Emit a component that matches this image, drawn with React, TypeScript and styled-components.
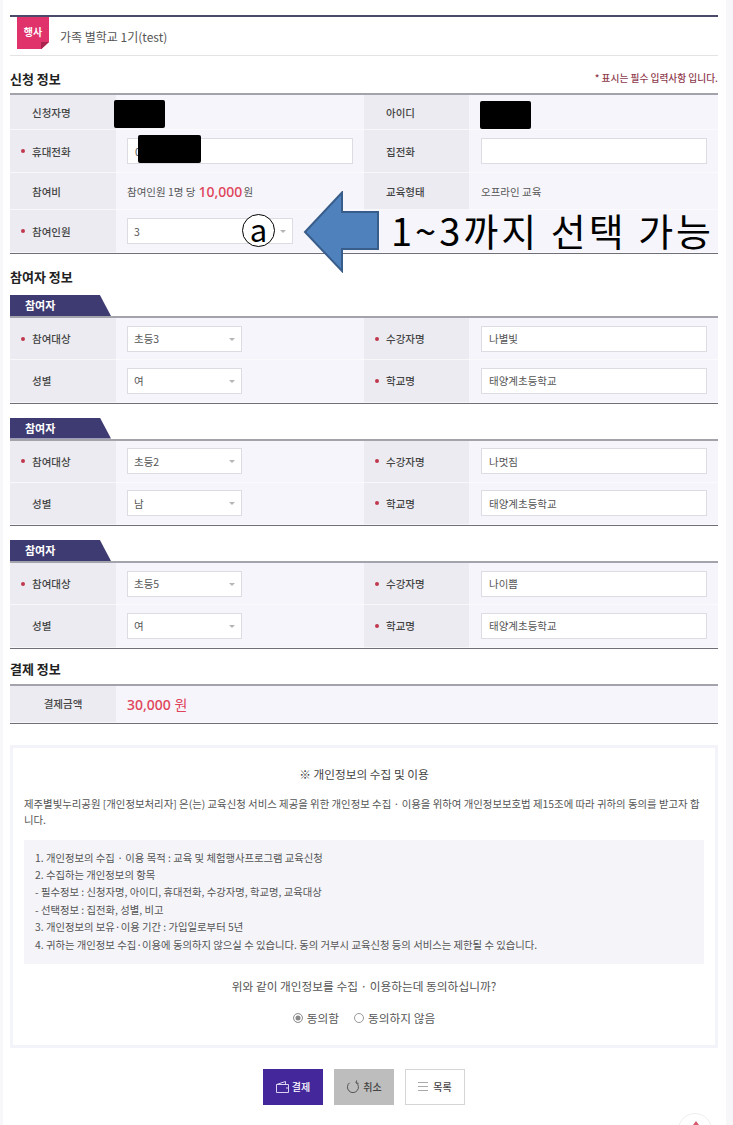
import styled, {createGlobalStyle} from "styled-components";

const GlobalStyle = createGlobalStyle`
  html, body {
    margin: 0;
    padding: 0;
    background: #fff;
  }
  body {
    font-family: "Noto Sans CJK KR", "Noto Sans", sans-serif;
    font-size: 10.5px;
    color: #555;
  }
`;

const Page = styled.div`
  position: relative;
  box-sizing: border-box;
  width: 733px;
  height: 1125px;
  overflow: hidden;
  padding: 15px 15px 0 10px;
  background: linear-gradient(to right, #f7f7f9 3px, #fff 3px, #fff 726px, #f7f7f9 726px);
`;

const EventHeader = styled.div`
  display: flex;
  align-items: center;
  height: 38px;
  border-top: 2px solid #4b4a6b;
  border-bottom: 1px solid #e3e3e3;
  padding-left: 7px;
`;

const Badge = styled.div`
  position: relative;
  align-self: flex-start;
  width: 32px;
  height: 32px;
  box-sizing: border-box;
  padding-top: 8px;
  text-align: center;
  font-size: 10px;
  font-weight: 700;
  line-height: 14px;
  color: #fff;
  background: #e0326b;
  clip-path: polygon(0 0, 100% 0, 100% 78%, 76% 100%, 0 100%);

  &::after {
    content: "";
    position: absolute;
    right: 0;
    bottom: 0;
    width: 8px;
    height: 7px;
    background: #a8244f;
  }
`;

const EventTitle = styled.div`
  margin-left: 11px;
  font-size: 12px;
  color: #555;
`;

const SectionHead = styled.div<{ $top: number }>`
  display: flex;
  justify-content: space-between;
  align-items: center;
  height: 18px;
  margin-top: ${props => props.$top}px;
  margin-bottom: 6px;
`;

const SectionTitle = styled.h2`
  margin: 0;
  font-size: 13px;
  font-weight: 700;
  color: #222;
`;

const RequiredNote = styled.div`
  font-size: 9.7px;
  font-weight: 500;
  color: #8e3a4c;
`;

const Table = styled.div`
  display: grid;
  grid-template-columns: 106px 248px 105px 249px;
  border-top: 2px solid #a3a3ab;
  border-bottom: 1px solid #6f6f7a;
`;

const Label = styled.div<{ $h: number; $center?: boolean }>`
  position: relative;
  display: flex;
  align-items: center;
  justify-content: ${props => props.$center ? "center" : "flex-start"};
  height: ${props => props.$h}px;
  padding-left: ${props => props.$center ? 0 : 22}px;
  background: #ebebf1;
  border-bottom: 1px solid #f8f8fb;
  box-sizing: border-box;
  font-weight: 500;
  color: #444;
`;

const Star = styled.span`
  position: absolute;
  left: 11px;
  top: 50%;
  margin-top: -2px;
  width: 4px;
  height: 4px;
  border-radius: 50%;
  background: #c0394f;
`;

const Value = styled.div<{ $h: number; $wide?: boolean; $right?: boolean }>`
  display: flex;
  align-items: center;
  height: ${props => props.$h}px;
  padding-left: ${props => props.$right ? 12 : 11}px;
  background: #f5f5fb;
  border-bottom: 1px solid #fbfbfd;
  box-sizing: border-box;
  grid-column: ${props => props.$wide ? "span 3" : "auto"};
  color: #555;
`;

const TextInput = styled.div`
  box-sizing: border-box;
  width: 226px;
  height: 26px;
  padding-left: 7px;
  display: flex;
  align-items: center;
  background: #fff;
  border: 1px solid #dcdce2;
`;

const SelectBox = styled.div<{ $w: number }>`
  position: relative;
  box-sizing: border-box;
  width: ${props => props.$w}px;
  height: 26px;
  padding-left: 6px;
  display: flex;
  align-items: center;
  background: #fff;
  border: 1px solid #dcdce2;

  &::after {
    content: "";
    position: absolute;
    right: 6px;
    top: 11px;
    border-left: 3px solid transparent;
    border-right: 3px solid transparent;
    border-top: 3px solid #b5b5b5;
  }
`;

const Fee = styled.strong`
  margin: 0 1px 0 3px;
  font-family: "Noto Sans", sans-serif;
  font-size: 14px;
  font-weight: 500;
  color: #e0445a;
`;

const Tab = styled.div<{ $top: number }>`
  width: 101px;
  height: 21px;
  margin-top: ${props => props.$top}px;
  padding-left: 15px;
  box-sizing: border-box;
  line-height: 20px;
  font-size: 11px;
  font-weight: 700;
  color: #fff;
  background: #3e3b72;
  clip-path: polygon(0 0, 89% 0, 100% 100%, 0 100%);
`;

const Amount = styled.div`
  font-family: "Noto Sans", sans-serif;
  font-size: 14px;
  font-weight: 500;
  color: #e0445a;

  span {
    font-weight: 400;
    font-family: "Noto Sans CJK KR", sans-serif;
  }
`;

const ConsentBox = styled.section`
  box-sizing: border-box;
  height: 303px;
  margin-top: 21px;
  padding: 17px 11px 0;
  border: 3px solid #f3f3fa;
`;

const ConsentTitle = styled.div`
  text-align: center;
  font-size: 11.7px;
  line-height: 18px;
  color: #444;
`;

const ConsentText = styled.p`
  margin: 13px 0 11px;
  line-height: 16.5px;
  font-size: 10.4px;
  word-break: break-all;
  color: #555;
`;

const TermsBox = styled.div`
  height: 124px;
  box-sizing: border-box;
  padding: 9px 11px;
  background: #f4f4f9;
  font-size: 10.35px;
  line-height: 17.4px;
  color: #555;
`;

const Question = styled.div`
  margin-top: 13px;
  text-align: center;
  font-size: 11.7px;
  line-height: 18px;
  color: #555;
`;

const RadioRow = styled.div`
  display: flex;
  justify-content: center;
  gap: 15px;
  margin-top: 14px;
  font-size: 11.7px;
  line-height: 18px;
`;

const RadioItem = styled.label`
  display: flex;
  align-items: center;
  gap: 4px;
`;

const RadioDot = styled.span<{ $on?: boolean }>`
  box-sizing: border-box;
  width: 10px;
  height: 10px;
  border-radius: 50%;
  border: 1px solid #999;
  background: ${props => props.$on ? "#888" : "#fff"};
  box-shadow: ${props => props.$on ? "inset 0 0 0 1.5px #fff" : "none"};
`;

const ButtonRow = styled.div`
  display: flex;
  justify-content: center;
  gap: 11px;
  margin-top: 21px;
`;

const Button = styled.button<{ $kind: "primary" | "muted" | "plain" }>`
  box-sizing: border-box;
  width: 60px;
  height: 36px;
  display: flex;
  align-items: center;
  justify-content: center;
  gap: ${props => props.$kind === "plain" ? 5 : 3}px;
  padding: 0;
  font-family: inherit;
  font-size: 10px;
  font-weight: 500;
  color: ${props => props.$kind === "primary" ? "#fff" : "#444"};
  background: ${props => ({primary: "#44289b", muted: "#bdbdbd", plain: "#fff"}[props.$kind])};
  border: 1px solid ${props => props.$kind === "plain" ? "#d5d5d5" : "transparent"};
`;

const Redaction = styled.div<{ $x: number; $y: number; $w: number }>`
  position: absolute;
  left: ${props => props.$x}px;
  top: ${props => props.$y}px;
  width: ${props => props.$w}px;
  height: 28px;
  border-radius: 2px;
  background: #000;
`;

const ArrowOverlay = styled.svg`
  position: absolute;
  left: 302px;
  top: 191px;
`;

const CircleMark = styled.div`
  position: absolute;
  left: 242px;
  top: 214px;
  box-sizing: border-box;
  width: 33px;
  height: 33px;
  border: 1px solid #000;
  border-radius: 50%;
  background: #fff;
  text-align: center;
  font-size: 31px;
  line-height: 27px;
  color: #000;
`;

const BigNote = styled.div`
  position: absolute;
  left: 391px;
  top: 207px;
  white-space: nowrap;
  font-size: 38px;
  line-height: 46px;
  letter-spacing: 3px;
  color: #000;
`;

const TopButton = styled.div`
  position: absolute;
  left: 678px;
  top: 1113px;
  box-sizing: border-box;
  width: 34px;
  height: 34px;
  border: 1px solid #eee;
  border-radius: 50%;
  background: #fff;

  &::after {
    content: "";
    position: absolute;
    left: 14px;
    top: 7px;
    border-left: 3px solid transparent;
    border-right: 3px solid transparent;
    border-bottom: 4px solid #d65a6e;
  }
`;

const WalletIcon = () => (
  <svg width="13" height="12" viewBox="0 0 13 12" fill="none" stroke="#d9d2f0" strokeWidth="1">
    <path d="M.5 3.500h12v8H.5z"/>
    <path d="M.5 3.500 9.500 .5v3"/>
    <path d="M10 7h2.500"/>
  </svg>
);

const RefreshIcon = () => (
  <svg width="14" height="14" viewBox="0 0 14 14" fill="none" stroke="#555" strokeWidth="1">
    <path d="M3.500 2.800a5.500 5.500 0 1 0 6.600 -.2"/>
    <path d="M10.600 .4 10 2.800l2.500 .5"/>
  </svg>
);

const ListIcon = () => (
  <svg width="10" height="9" viewBox="0 0 10 9" fill="none" stroke="#aaa" strokeWidth="1">
    <path d="M0 .5h10M0 4.500h10M0 8.500h10"/>
  </svg>
);

type Participant = { grade: string; gender: string; name: string };

const participants: Participant[] = [
  {grade: "초등3", gender: "여", name: "나별빛"},
  {grade: "초등2", gender: "남", name: "나멋짐"},
  {grade: "초등5", gender: "여", name: "나이쁨"},
];

const ParticipantBlock = ({item, top}: { item: Participant; top: number }) => (
  <>
    <Tab $top={top}>참여자</Tab>
    <Table>
      <Label $h={42.25}><Star/>참여대상</Label>
      <Value $h={42.25}><SelectBox $w={115}>{item.grade}</SelectBox></Value>
      <Label $h={42.25}><Star/>수강자명</Label>
      <Value $h={42.25} $right><TextInput>{item.name}</TextInput></Value>
      <Label $h={42.25}>성별</Label>
      <Value $h={42.25}><SelectBox $w={115}>{item.gender}</SelectBox></Value>
      <Label $h={42.25}><Star/>학교명</Label>
      <Value $h={42.25} $right><TextInput>태양계초등학교</TextInput></Value>
    </Table>
  </>
);

const terms = [
  "1. 개인정보의 수집 · 이용 목적 : 교육 및 체험행사프로그램 교육신청",
  "2. 수집하는 개인정보의 항목",
  "- 필수정보 : 신청자명, 아이디, 휴대전화, 수강자명, 학교명, 교육대상",
  "- 선택정보 : 집전화, 성별, 비고",
  "3. 개인정보의 보유·이용 기간 : 가입일로부터 5년",
  "4. 귀하는 개인정보 수집·이용에 동의하지 않으실 수 있습니다. 동의 거부시 교육신청 등의 서비스는 제한될 수 있습니다.",
];

const App = () => (
  <Page>
    <GlobalStyle/>
    <EventHeader>
      <Badge>행사</Badge>
      <EventTitle>가족 별학교 1기(test)</EventTitle>
    </EventHeader>

    <SectionHead $top={13}>
      <SectionTitle>신청 정보</SectionTitle>
      <RequiredNote>* 표시는 필수 입력사항 입니다.</RequiredNote>
    </SectionHead>
    <Table>
      <Label $h={35}>신청자명</Label>
      <Value $h={35}/>
      <Label $h={35}>아이디</Label>
      <Value $h={35} $right/>
      <Label $h={43}><Star/>휴대전화</Label>
      <Value $h={43}><TextInput>0</TextInput></Value>
      <Label $h={43}>집전화</Label>
      <Value $h={43} $right><TextInput/></Value>
      <Label $h={37}>참여비</Label>
      <Value $h={37}>참여인원 1명 당 <Fee>10,000</Fee>원</Value>
      <Label $h={37}>교육형태</Label>
      <Value $h={37} $right>오프라인 교육</Value>
      <Label $h={43}><Star/>참여인원</Label>
      <Value $h={43}><SelectBox $w={166}>3</SelectBox></Value>
      <Value $h={43}/>
      <Value $h={43}/>
    </Table>

    <SectionHead $top={13}>
      <SectionTitle>참여자 정보</SectionTitle>
    </SectionHead>
    {participants.map((item, idx) => (
      <ParticipantBlock item={item} top={idx ? 14 : 10} key={item.name}/>
    ))}

    <SectionHead $top={11}>
      <SectionTitle>결제 정보</SectionTitle>
    </SectionHead>
    <Table>
      <Label $h={37} $center>결제금액</Label>
      <Value $h={37} $wide><Amount>30,000 <span>원</span></Amount></Value>
    </Table>

    <ConsentBox>
      <ConsentTitle>※ 개인정보의 수집 및 이용</ConsentTitle>
      <ConsentText>
        제주별빛누리공원 [개인정보처리자] 은(는) 교육신청 서비스 제공을 위한 개인정보 수집 · 이용을 위하여 개인정보보호법 제15조에 따라 귀하의 동의를 받고자 합니다.
      </ConsentText>
      <TermsBox>
        {terms.map(line => <div key={line}>{line}</div>)}
      </TermsBox>
      <Question>위와 같이 개인정보를 수집 · 이용하는데 동의하십니까?</Question>
      <RadioRow>
        <RadioItem><RadioDot $on/>동의함</RadioItem>
        <RadioItem><RadioDot/>동의하지 않음</RadioItem>
      </RadioRow>
    </ConsentBox>

    <ButtonRow>
      <Button $kind="primary"><WalletIcon/>결제</Button>
      <Button $kind="muted"><RefreshIcon/>취소</Button>
      <Button $kind="plain"><ListIcon/>목록</Button>
    </ButtonRow>

    <Redaction $x={114} $y={100} $w={51}/>
    <Redaction $x={138} $y={135} $w={63}/>
    <Redaction $x={480} $y={101} $w={51}/>
    <CircleMark>a</CircleMark>
    <ArrowOverlay width="78" height="82" viewBox="0 0 78 82">
      <path d="M3 41 40 1.500V21h36v37H40v22z" fill="#4f81bd" stroke="#385d8a" strokeWidth="2"/>
    </ArrowOverlay>
    <BigNote>1~3까지 선택 가능</BigNote>
    <TopButton/>
  </Page>
);

export default App;
